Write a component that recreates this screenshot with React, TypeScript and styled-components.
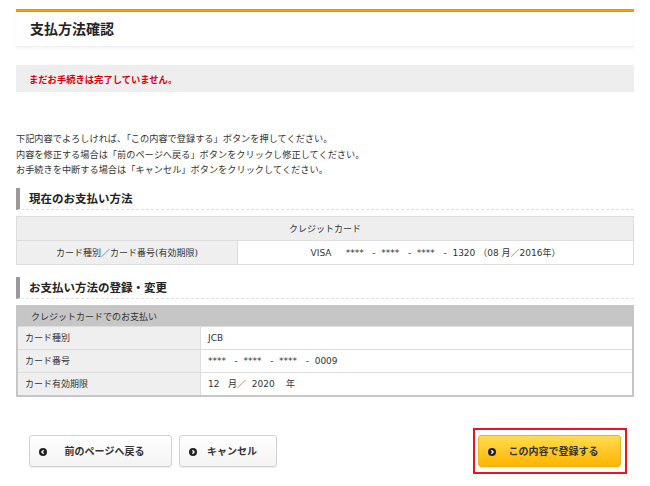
import styled, { createGlobalStyle } from "styled-components";

const GlobalStyle = createGlobalStyle`
  body {
    margin: 0;
    background: #fff;
    color: #333;
    font-family: "DejaVu Sans", "Noto Sans CJK JP", sans-serif;
  }
`;

const Page = styled.div`
  width: 618px;
  padding: 9px 16px 0;
`;

const Header = styled.h1`
  margin: 0;
  height: 32px;
  display: flex;
  align-items: center;
  padding: 0 0 2px 14px;
  box-sizing: content-box;
  border-top: 3px solid #f39800;
  border-bottom: 1px solid #eee;
  box-shadow: 0 2px 3px rgba(0, 0, 0, 0.04);
  font-family: "Noto Sans CJK JP", sans-serif;
  font-size: 14px;
  font-weight: bold;
  color: #222;
`;

const Notice = styled.div`
  margin-top: 18px;
  height: 27px;
  display: flex;
  align-items: center;
  padding-left: 13px;
  background: #eee;
  color: #d7000f;
  font-size: 9.3px;
  font-weight: bold;
`;

const Intro = styled.p`
  margin: 39px 0 0;
  font-size: 9.2px;
  line-height: 15.5px;
`;

const SectionHeading = styled.h2<{ $top: number }>`
  margin: ${(p) => p.$top}px 0 0;
  height: 21px;
  display: flex;
  align-items: center;
  padding-left: 9px;
  border-left: 4px solid #999;
  border-bottom: 1px dashed #e2e2e2;
  font-family: "Noto Sans CJK JP", sans-serif;
  font-size: 11.5px;
  font-weight: bold;
  color: #222;
`;

const Table = styled.table<{ $strong?: boolean }>`
  width: 100%;
  margin-top: 6px;
  border-collapse: collapse;
  border: ${(p) => (p.$strong ? "2px solid #c6c6c6" : "1px solid #ddd")};
  font-size: 9px;
`;

const HeadCell = styled.th<{ $dark?: boolean }>`
  height: ${(p) => (p.$dark ? 19 : 23)}px;
  padding: 0 0 0 ${(p) => (p.$dark ? 13 : 0)}px;
  background: ${(p) => (p.$dark ? "#c6c6c6" : "#eee")};
  text-align: ${(p) => (p.$dark ? "left" : "center")};
  font-weight: normal;
  border-bottom: 1px solid #ddd;
`;

const LabelCell = styled.td<{ $width: number; $center?: boolean }>`
  width: ${(p) => p.$width}px;
  height: ${(p) => (p.$center ? 23 : 22)}px;
  padding: 0 0 0 ${(p) => (p.$center ? 0 : 7)}px;
  background: #efefef;
  text-align: ${(p) => (p.$center ? "center" : "left")};
  border-bottom: 1px solid #ddd;
  border-right: 1px solid #ddd;
`;

const ValueCell = styled.td<{ $center?: boolean }>`
  padding: 0 0 0 ${(p) => (p.$center ? 0 : 7)}px;
  background: #fff;
  text-align: ${(p) => (p.$center ? "center" : "left")};
  white-space: pre;
  border-bottom: 1px solid #ddd;
`;

const Actions = styled.div`
  margin-top: 31px;
  display: flex;
  align-items: center;
  padding-left: 13px;
  padding-right: 7px;
`;

const Button = styled.button<{ $width: number; $primary?: boolean }>`
  position: relative;
  width: ${(p) => p.$width}px;
  height: 32px;
  padding: 0 10px 0 18px;
  border: 1px solid ${(p) => (p.$primary ? "#e6b422" : "#d2d2d2")};
  border-radius: 3px;
  background: ${(p) =>
    p.$primary
      ? "linear-gradient(#ffdc4f, #ffb500)"
      : "linear-gradient(#fff, #f3f3f3)"};
  box-shadow: 0 1px 1px rgba(0, 0, 0, 0.08);
  font-family: "Noto Sans CJK JP", sans-serif;
  font-size: 10px;
  font-weight: bold;
  color: #333;
  display: flex;
  align-items: center;
  justify-content: center;
`;

const Icon = styled.span`
  position: absolute;
  left: 9px;
  top: 12px;
  width: 8px;
  height: 8px;
  border-radius: 50%;
  background: #222;
  display: flex;
`;

const Spacer = styled.div`
  width: 7px;
`;

const Highlight = styled.div`
  margin-left: auto;
  padding: 5px 4px 5px 3px;
  border: 2px solid #e8141e;
`;

function Chevron({ dir }: { dir: "left" | "right" }) {
  return (
    <Icon>
      <svg width="8" height="8" viewBox="0 0 8 8">
        <path
          d={dir === "left" ? "M4.6 2.2 L2.9 4 L4.6 5.8" : "M3.4 2.2 L5.1 4 L3.4 5.8"}
          fill="none"
          stroke="#fff"
          strokeWidth="1.3"
        />
      </svg>
    </Icon>
  );
}

export default function App() {
  return (
    <>
      <GlobalStyle />
      <Page>
        <Header>支払方法確認</Header>
        <Notice>まだお手続きは完了していません。</Notice>
        <Intro>
          下記内容でよろしければ、「この内容で登録する」ボタンを押してください。
          <br />
          内容を修正する場合は「前のページへ戻る」ボタンをクリックし修正してください。
          <br />
          お手続きを中断する場合は「キャンセル」ボタンをクリックしてください。
        </Intro>

        <SectionHeading $top={10}>現在のお支払い方法</SectionHeading>
        <Table>
          <tbody>
            <tr>
              <HeadCell colSpan={2}>クレジットカード</HeadCell>
            </tr>
            <tr>
              <LabelCell $width={220} $center>
                カード種別／カード番号(有効期限)
              </LabelCell>
              <ValueCell $center>
                {"VISA     ****   -  ****   -  ****   -  1320 （08 月／2016年）"}
              </ValueCell>
            </tr>
          </tbody>
        </Table>

        <SectionHeading $top={12}>お支払い方法の登録・変更</SectionHeading>
        <Table $strong>
          <tbody>
            <tr>
              <HeadCell colSpan={2} $dark>
                クレジットカードでのお支払い
              </HeadCell>
            </tr>
            <tr>
              <LabelCell $width={175}>カード種別</LabelCell>
              <ValueCell>JCB</ValueCell>
            </tr>
            <tr>
              <LabelCell $width={175}>カード番号</LabelCell>
              <ValueCell>{"****   -  ****   -  ****   -  0009"}</ValueCell>
            </tr>
            <tr>
              <LabelCell $width={175}>カード有効期限</LabelCell>
              <ValueCell>{"12   月／  2020    年"}</ValueCell>
            </tr>
          </tbody>
        </Table>

        <Actions>
          <Button $width={143}>
            <Chevron dir="left" />
            前のページへ戻る
          </Button>
          <Spacer />
          <Button $width={98}>
            <Chevron dir="right" />
            キャンセル
          </Button>
          <Highlight>
            <Button $width={143} $primary>
              <Chevron dir="right" />
              この内容で登録する
            </Button>
          </Highlight>
        </Actions>
      </Page>
    </>
  );
}
